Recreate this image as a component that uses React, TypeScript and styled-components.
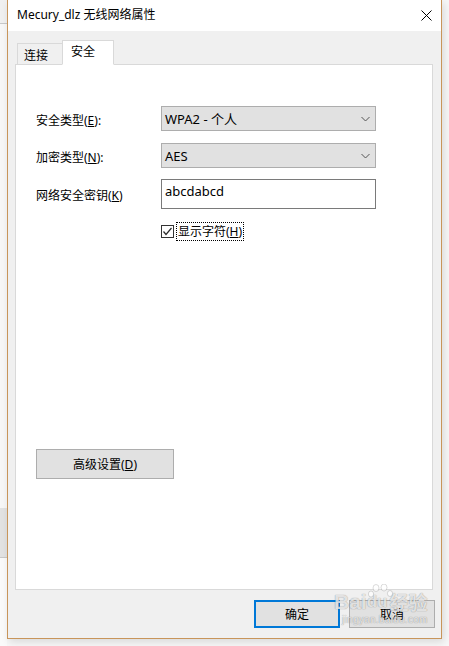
import React from 'react';
import styled, { createGlobalStyle } from 'styled-components';

const GlobalStyle = createGlobalStyle`
  html, body {
    margin: 0;
    padding: 0;
    background: #f7f7f7;
    overflow: hidden;
  }
  body {
    font-family: "Noto Sans", "Noto Sans CJK SC", sans-serif;
    font-size: 12px;
    color: #000;
  }
`;

const Desktop = styled.div`
  display: flex;
  width: 449px;
  height: 646px;
  background: #f7f7f7;
`;

const DesktopEdge = styled.div`
  display: flex;
  flex-direction: column;
  width: 7px;
`;

const EdgeBlock = styled.div<{ $h: number; $bg: string; $line?: boolean }>`
  height: ${(p) => p.$h}px;
  background: ${(p) => p.$bg};
  border-bottom: ${(p) => (p.$line ? '1px solid #c8c8c8' : 'none')};
  box-shadow: ${(p) => (p.$line ? '0 2px 3px rgba(0,0,0,0.08)' : 'none')};
`;

const Window = styled.div`
  position: relative;
  display: flex;
  flex-direction: column;
  width: 433px;
  height: 638px;
  border: 1px solid #c8955a;
  border-top: none;
  background: #f0f0f0;
  box-shadow: 2px 3px 8px rgba(0, 0, 0, 0.12);
`;

const TitleBar = styled.div`
  display: flex;
  align-items: center;
  justify-content: space-between;
  height: 31px;
  padding: 0 9px 0 9px;
  background: #fff;
`;

const Title = styled.span`
  font-size: 12px;
  line-height: 16px;
  margin-top: -1px;
`;

const CloseIcon = styled.svg`
  display: block;
  width: 11px;
  height: 11px;
`;

const Body = styled.div`
  display: flex;
  flex-direction: column;
  padding: 9px 8px 10px 7px;
  flex: 1;
`;

const TabRow = styled.div`
  display: flex;
  align-items: flex-end;
  height: 24px;
  margin-left: 2px;
`;

const Tab = styled.div<{ $active?: boolean }>`
  position: relative;
  z-index: ${(p) => (p.$active ? 1 : 0)};
  display: flex;
  align-items: center;
  box-sizing: border-box;
  height: ${(p) => (p.$active ? 25 : 21)}px;
  margin-bottom: ${(p) => (p.$active ? -1 : 0)}px;
  padding: ${(p) => (p.$active ? '0 0 3px 8px' : '1px 0 0 6px')};
  width: ${(p) => (p.$active ? 52 : 46)}px;
  border: 1px solid #d9d9d9;
  border-bottom: ${(p) => (p.$active ? '1px solid #fff' : 'none')};
  border-left: ${(p) => (p.$active ? '1px solid #d9d9d9' : '1px solid #d9d9d9')};
  margin-right: ${(p) => (p.$active ? 0 : -1)}px;
  background: ${(p) => (p.$active ? '#fff' : '#f0f0f0')};
`;

const Panel = styled.div`
  display: flex;
  flex-direction: column;
  box-sizing: border-box;
  height: 526px;
  padding: 41px 0 0 20px;
  background: #fff;
  border: 1px solid #d9d9d9;
`;

const FormRow = styled.div<{ $top?: number; $h: number }>`
  display: flex;
  align-items: center;
  height: ${(p) => p.$h}px;
  margin-top: ${(p) => p.$top ?? 0}px;
`;

const Label = styled.div`
  width: 125px;
  padding-top: 2px;
  white-space: nowrap;
`;

const Combo = styled.div`
  display: flex;
  align-items: center;
  justify-content: space-between;
  box-sizing: border-box;
  width: 215px;
  height: 25px;
  padding: 0 5px 0 3px;
  background: #e1e1e1;
  border: 1px solid #adadad;
`;

const ComboText = styled.span`
  font-size: 13px;
`;

const Chevron = styled.svg`
  display: block;
  width: 9px;
  height: 6px;
`;

const TextField = styled.div`
  box-sizing: border-box;
  width: 215px;
  height: 30px;
  padding: 2px 3px;
  border: 1px solid #7a7a7a;
  background: #fff;
  font-size: 13px;
`;

const CheckRow = styled.div`
  display: flex;
  align-items: center;
  margin-left: 125px;
  margin-top: 12px;
  height: 20px;
`;

const CheckBox = styled.div`
  display: flex;
  align-items: center;
  justify-content: center;
  box-sizing: border-box;
  width: 13px;
  height: 13px;
  border: 1px solid #333;
  background: #fff;
`;

const FocusLabel = styled.span`
  margin-left: 2px;
  padding: 0 1px;
  line-height: 17px;
  border: 1px dotted #000;
`;

const Button = styled.div<{ $focused?: boolean; $w: number; $h: number }>`
  display: flex;
  align-items: center;
  justify-content: center;
  box-sizing: border-box;
  width: ${(p) => p.$w}px;
  height: ${(p) => p.$h}px;
  background: #e1e1e1;
  border: ${(p) => (p.$focused ? '2px solid #0078d7' : '1px solid #adadad')};
`;

const AdvancedButton = styled(Button)`
  margin-top: 208px;
`;

const ButtonRow = styled.div`
  display: flex;
  justify-content: flex-end;
  gap: 9px;
  margin-top: 10px;
  margin-right: -2px;
`;

const Watermark = styled.div`
  position: absolute;
  left: 326px;
  top: 590px;
  display: flex;
  flex-direction: column;
  align-items: flex-start;
  pointer-events: none;
  color: rgba(255, 255, 255, 0.75);
  text-shadow: 0 0 1px rgba(0, 0, 0, 0.25), 0 0 1px rgba(0, 0, 0, 0.25);
`;

const WatermarkLine = styled.div`
  display: flex;
  align-items: flex-end;
  font-family: "Liberation Sans", "Noto Sans CJK SC", sans-serif;
  font-weight: bold;
  font-size: 21px;
  line-height: 24px;
`;

const WatermarkCn = styled.span`
  font-family: "Noto Sans CJK SC", sans-serif;
  font-size: 19px;
  margin-left: 2px;
`;

const PawBox = styled.span`
  position: relative;
  display: inline-flex;
  align-items: flex-end;
  font-size: 17px;
`;

const PawIcon = styled.svg`
  position: absolute;
  left: 1px;
  top: -6px;
  width: 26px;
  height: 20px;
`;

const WatermarkUrl = styled.div`
  margin-left: 8px;
  font-family: "Liberation Sans", sans-serif;
  font-size: 10px;
  line-height: 11px;
  letter-spacing: 0.3px;
`;

export default function App() {
  return (
    <>
      <GlobalStyle />
      <Desktop>
        <DesktopEdge>
          <EdgeBlock $h={23} $bg="#f0f0f0" $line />
          <EdgeBlock $h={485} $bg="#f7f7f7" />
          <EdgeBlock $h={49} $bg="#e2e2e2" $line />
          <EdgeBlock $h={88} $bg="#fafafa" />
        </DesktopEdge>
        <Window>
          <TitleBar>
            <Title>Mecury_dlz 无线网络属性</Title>
            <CloseIcon viewBox="0 0 11 11">
              <path d="M0.5 0.5 L10.5 10.5 M10.5 0.5 L0.5 10.5" stroke="#000" strokeWidth="1" fill="none" />
            </CloseIcon>
          </TitleBar>
          <Body>
            <TabRow>
              <Tab>连接</Tab>
              <Tab $active>安全</Tab>
            </TabRow>
            <Panel>
              <FormRow $h={25}>
                <Label>
                  安全类型(<u>E</u>):
                </Label>
                <Combo>
                  <ComboText>WPA2 - 个人</ComboText>
                  <Chevron viewBox="0 0 9 6">
                    <polyline points="0.5,1 4.5,5 8.5,1" stroke="#555" strokeWidth="1" fill="none" />
                  </Chevron>
                </Combo>
              </FormRow>
              <FormRow $h={25} $top={12}>
                <Label>
                  加密类型(<u>N</u>):
                </Label>
                <Combo>
                  <ComboText>AES</ComboText>
                  <Chevron viewBox="0 0 9 6">
                    <polyline points="0.5,1 4.5,5 8.5,1" stroke="#555" strokeWidth="1" fill="none" />
                  </Chevron>
                </Combo>
              </FormRow>
              <FormRow $h={30} $top={11}>
                <Label>
                  网络安全密钥(<u>K</u>)
                </Label>
                <TextField>abcdabcd</TextField>
              </FormRow>
              <CheckRow>
                <CheckBox>
                  <svg width="11" height="11" viewBox="0 0 11 11">
                    <polyline points="1.5,5.5 4,8.5 9.5,2" stroke="#2b2b2b" strokeWidth="1.2" fill="none" />
                  </svg>
                </CheckBox>
                <FocusLabel>
                  显示字符(<u>H</u>)
                </FocusLabel>
              </CheckRow>
              <AdvancedButton $w={138} $h={30}>
                高级设置(<u>D</u>)
              </AdvancedButton>
            </Panel>
            <ButtonRow>
              <Button $focused $w={86} $h={28}>
                确定
              </Button>
              <Button $w={86} $h={28}>
                取消
              </Button>
            </ButtonRow>
          </Body>
          <Watermark>
            <WatermarkLine>
              Bai
              <PawBox>
                <PawIcon viewBox="0 0 26 20">
                  <g fill="rgba(255,255,255,0.7)" stroke="rgba(0,0,0,0.18)" strokeWidth="0.8">
                    <ellipse cx="8" cy="4" rx="3" ry="3.5" />
                    <ellipse cx="16" cy="3.5" rx="3" ry="3.5" />
                    <ellipse cx="3" cy="10" rx="2.6" ry="3" />
                    <ellipse cx="22" cy="9.5" rx="2.6" ry="3" />
                  </g>
                </PawIcon>
                du
              </PawBox>
              <WatermarkCn>经验</WatermarkCn>
            </WatermarkLine>
            <WatermarkUrl>jingyan.baidu.com</WatermarkUrl>
          </Watermark>
        </Window>
      </Desktop>
    </>
  );
}
